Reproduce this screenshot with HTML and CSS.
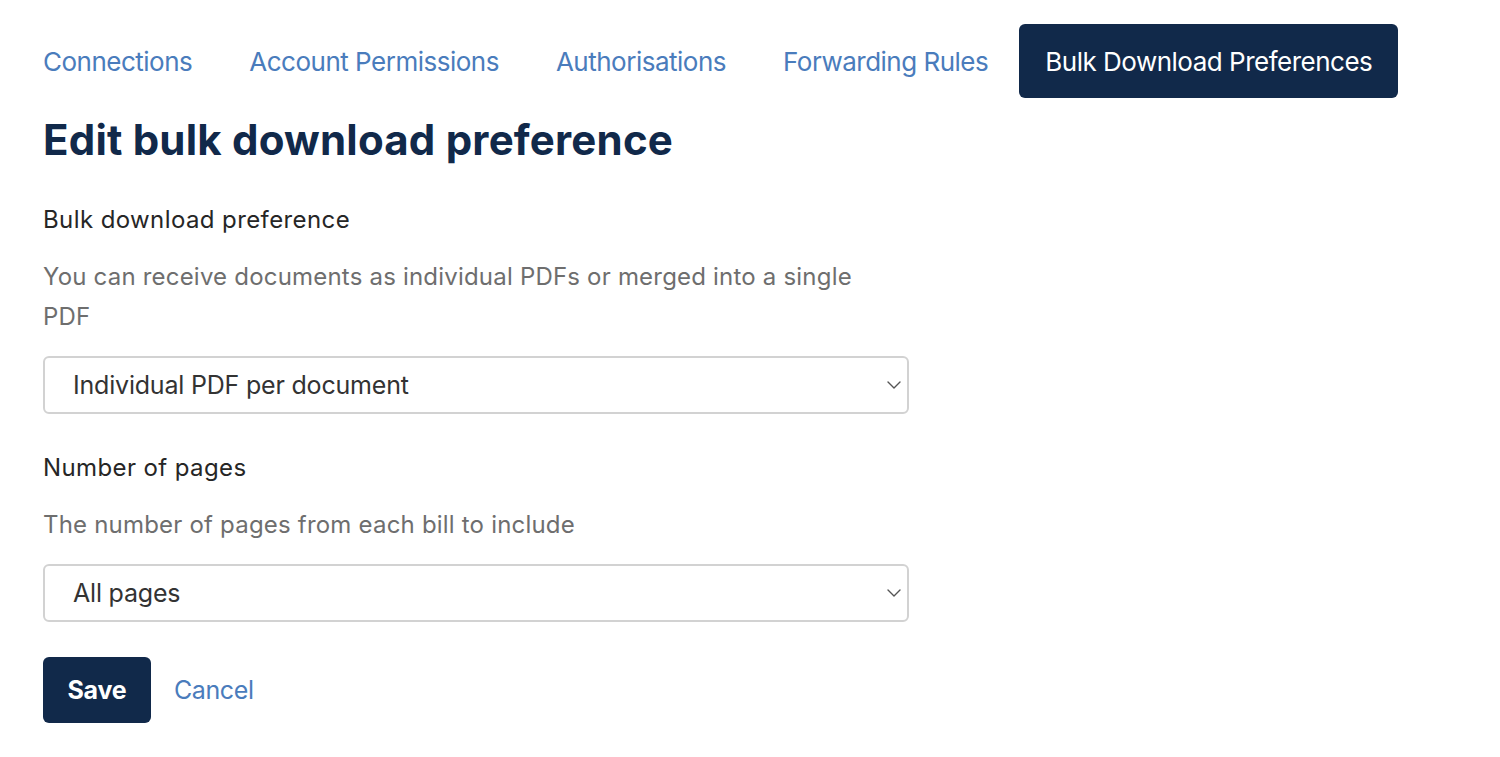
FILE: index.html
```html
<!DOCTYPE html>
<html lang="en">
<head>
<meta charset="utf-8">
<title>Edit bulk download preference</title>
<link rel="stylesheet" href="styles.css">
</head>
<body>
<div class="page">
  <nav class="tabs">
    <a class="tab" href="#">Connections</a>
    <a class="tab" href="#">Account Permissions</a>
    <a class="tab" href="#">Authorisations</a>
    <a class="tab" href="#">Forwarding Rules</a>
    <a class="tab active" href="#">Bulk Download Preferences</a>
  </nav>
  <h1 class="title">Edit bulk download preference</h1>
  <form class="form">
    <div class="field">
      <label class="label" for="pref">Bulk download preference</label>
      <p class="hint">You can receive documents as individual PDFs or merged into a single PDF</p>
      <div class="select-wrap">
        <select id="pref" class="select">
          <option>Individual PDF per document</option>
          <option>Single merged PDF</option>
        </select>
        <svg class="chev" width="14" height="8" viewBox="0 0 14 8"><path d="M1 1l6 6 6-6" fill="none" stroke="#555" stroke-width="1.4" stroke-linecap="round" stroke-linejoin="round"/></svg>
      </div>
    </div>
    <div class="field">
      <label class="label" for="pages">Number of pages</label>
      <p class="hint">The number of pages from each bill to include</p>
      <div class="select-wrap">
        <select id="pages" class="select">
          <option>All pages</option>
          <option>First page only</option>
        </select>
        <svg class="chev" width="14" height="8" viewBox="0 0 14 8"><path d="M1 1l6 6 6-6" fill="none" stroke="#555" stroke-width="1.4" stroke-linecap="round" stroke-linejoin="round"/></svg>
      </div>
    </div>
    <div class="actions">
      <button type="button" class="btn">Save</button>
      <a class="cancel" href="#">Cancel</a>
    </div>
  </form>
</div>
</body>
</html>
```

FILE: styles.css
```css
* { box-sizing: border-box; }
body {
  margin: 0;
  background: #fff;
  font-family: Inter, "Noto Sans", "Liberation Sans", sans-serif;
  color: #222;
}
.page {
  padding: 24px 43px 0;
}
.tabs {
  display: flex;
  gap: 5px;
  margin-left: -26px;
  height: 74px;
}
.tab {
  display: flex;
  align-items: center;
  padding: 0 26px;
  font-size: 26px;
  letter-spacing: -0.5px;
  color: #4a7cbc;
  text-decoration: none;
  border-radius: 6px;
}
.tab.active {
  background: #11294a;
  color: #fff;
}
.title {
  margin: 17px 0 0;
  font-size: 42px;
  line-height: 50px;
  font-weight: 700;
  letter-spacing: 0.2px;
  color: #11294a;
}
.form {
  display: flex;
  flex-direction: column;
  gap: 35px;
  margin-top: 38px;
  width: 866px;
}
.field + .field {
  margin-top: 2px;
}
.label {
  display: block;
  font-size: 24px;
  line-height: 34px;
  letter-spacing: 0.4px;
  color: #262626;
  margin-bottom: 20px;
}
.hint {
  max-width: 840px;
  margin: 0 0 19px;
  font-size: 24px;
  line-height: 40px;
  letter-spacing: 0.2px;
  color: #6e6e6e;
}
.select-wrap {
  position: relative;
}
.select {
  display: block;
  width: 100%;
  height: 58px;
  appearance: none;
  -webkit-appearance: none;
  border: 2px solid #d2d2d2;
  border-radius: 6px;
  background: #fff;
  padding: 0 40px 0 28px;
  font-family: inherit;
  font-size: 25px;
  letter-spacing: -0.2px;
  color: #333;
}
.chev {
  position: absolute;
  right: 8px;
  top: 25px;
}
.actions {
  display: flex;
  align-items: center;
  gap: 23px;
}
.btn {
  width: 108px;
  height: 66px;
  border: none;
  border-radius: 6px;
  background: #11294a;
  color: #fff;
  font-family: inherit;
  font-size: 25px;
  font-weight: 700;
  letter-spacing: -0.2px;
}
.cancel {
  font-size: 25px;
  letter-spacing: -0.4px;
  color: #4a7cbc;
  text-decoration: none;
}
```
